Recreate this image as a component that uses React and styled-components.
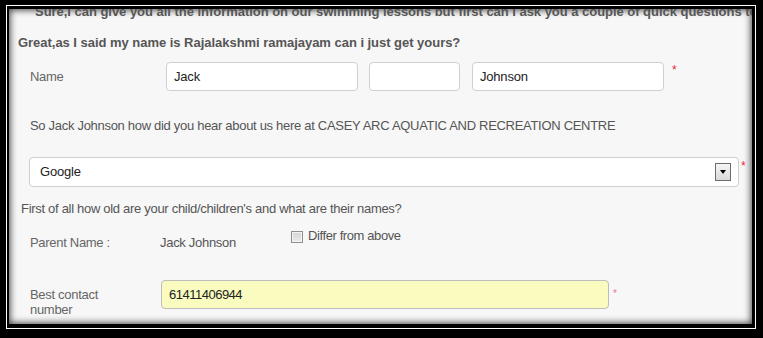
import React from "react";
import styled, { createGlobalStyle } from "styled-components";

const Global = createGlobalStyle`
  html, body { margin: 0; padding: 0; background: #000; }
  body { width: 763px; height: 338px; overflow: hidden; font-family: "Liberation Sans", Arial, sans-serif; }
  #root { width: 763px; height: 338px; }
`;

const Frame = styled.div`
  margin: 5px 7px 9px 6px;
  border: 1px solid #fff;
  padding: 3px 3px 4px 2px;
  background: #000;
  box-sizing: border-box;
  height: calc(338px - 14px);
`;

const Panel = styled.div`
  height: 100%;
  background: #f7f7f7;
  box-shadow: inset 0 0 7px 1px rgba(0, 0, 0, 0.75);
  overflow: hidden;
  display: flex;
  flex-direction: column;
  font-size: 13px;
  line-height: 16px;
  color: #555;
`;

const Heading = styled.div`
  font-weight: bold;
  white-space: nowrap;
  letter-spacing: -0.03px;
  margin-top: ${(p) => p.$mt}px;
  padding-left: ${(p) => p.$pl}px;
  color: #555;
`;

const Line = styled.div`
  white-space: nowrap;
  letter-spacing: -0.3px;
  margin-top: ${(p) => p.$mt}px;
  padding-left: ${(p) => p.$pl}px;
  color: ${(p) => p.$color || "#555"};
`;

const Row = styled.div`
  display: flex;
  align-items: flex-start;
  margin-top: ${(p) => p.$mt}px;
  padding-left: ${(p) => p.$pl}px;
`;

const Label = styled.div`
  width: ${(p) => p.$w}px;
  flex: none;
  padding-top: 7px;
  letter-spacing: -0.3px;
  line-height: ${(p) => p.$lh || 16}px;
  color: #666;
`;

const Value = styled.div`
  width: ${(p) => p.$w}px;
  flex: none;
  padding-top: 7px;
  letter-spacing: -0.3px;
  color: #555;
`;

const TextInput = styled.input`
  box-sizing: border-box;
  width: ${(p) => p.$w}px;
  height: 29px;
  margin: 0 ${(p) => p.$mr || 0}px 0 0;
  border: 1px solid ${(p) => (p.$yellow ? "#bdbdbd" : "#cfcfcf")};
  border-radius: 4px;
  background: ${(p) => (p.$yellow ? "#f9fbbf" : "#fff")};
  padding: 0 7px;
  font: 13px "Liberation Sans", Arial, sans-serif;
  letter-spacing: ${(p) => (p.$yellow ? -0.5 : -0.2)}px;
  color: #222;
  outline: none;
`;

const Star = styled.span`
  color: ${(p) => (p.$soft ? "#f07890" : "#f0243c")};
  font-size: ${(p) => (p.$soft ? 10 : 12)}px;
  line-height: 12px;
  margin-left: ${(p) => p.$ml}px;
  margin-top: ${(p) => p.$mt}px;
`;

const SelectRow = styled.div`
  display: flex;
  align-items: flex-start;
  margin-top: 23px;
  padding-left: 20px;
`;

const Select = styled.div`
  box-sizing: border-box;
  width: 710px;
  height: 30px;
  border: 1px solid #cfcfcf;
  border-radius: 4px;
  background: #fff;
  display: flex;
  align-items: center;
  justify-content: space-between;
  padding: 0 7px 0 10px;
  letter-spacing: -0.2px;
  color: #222;
`;

const DropButton = styled.span`
  box-sizing: border-box;
  width: 16px;
  height: 18px;
  border: 1px solid #6d6d6d;
  background: linear-gradient(#f6f6f6, #d9d9d9);
  display: flex;
  align-items: center;
  justify-content: center;
  &::after {
    content: "";
    border-left: 3.5px solid transparent;
    border-right: 3.5px solid transparent;
    border-top: 4px solid #000;
  }
`;

const CheckWrap = styled.label`
  display: flex;
  align-items: flex-start;
  gap: 5px;
  letter-spacing: -0.4px;
  color: #555;
`;

const Box = styled.span`
  box-sizing: border-box;
  width: 12px;
  height: 12px;
  margin-top: 3px;
  border: 1px solid #8e8e8e;
  box-shadow: inset 0 0 0 1px #f4f4f4;
  background: linear-gradient(#d4d4d4, #ececec);
`;

export default function App() {
  return (
    <>
      <Global />
      <Frame>
        <Panel>
          <Heading $mt={-5} $pl={26}>
            Sure,I can give you all the information on our swimming lessons but first can I ask you a couple of quick questions to get a better idea
          </Heading>
          <Heading $mt={15} $pl={9}>
            Great,as I said my name is Rajalakshmi ramajayam can i just get yours?
          </Heading>
          <Row $mt={11} $pl={21}>
            <Label $w={136}>Name</Label>
            <TextInput $w={192} $mr={11} defaultValue="Jack" readOnly />
            <TextInput $w={91} $mr={12} defaultValue="" readOnly />
            <TextInput $w={192} defaultValue="Johnson" readOnly />
            <Star $ml={8} $mt={2}>*</Star>
          </Row>
          <Line $mt={27} $pl={21}>
            So Jack Johnson how did you hear about us here at CASEY ARC AQUATIC AND RECREATION CENTRE
          </Line>
          <SelectRow>
            <Select>
              <span>Google</span>
              <DropButton />
            </Select>
            <Star $ml={2} $mt={3}>*</Star>
          </SelectRow>
          <Line $mt={14} $pl={12}>
            First of all how old are your child/children's and what are their names?
          </Line>
          <Row $mt={11} $pl={21}>
            <Label $w={130}>Parent Name :</Label>
            <Value $w={131}>Jack Johnson</Value>
            <CheckWrap>
              <Box />
              Differ from above
            </CheckWrap>
          </Row>
          <Row $mt={29} $pl={21}>
            <Label $w={131} $lh={15}>
              Best contact
              <br />
              number
            </Label>
            <TextInput $w={448} $yellow defaultValue="61411406944" readOnly />
            <Star $soft $ml={4} $mt={8}>*</Star>
          </Row>
        </Panel>
      </Frame>
    </>
  );
}
